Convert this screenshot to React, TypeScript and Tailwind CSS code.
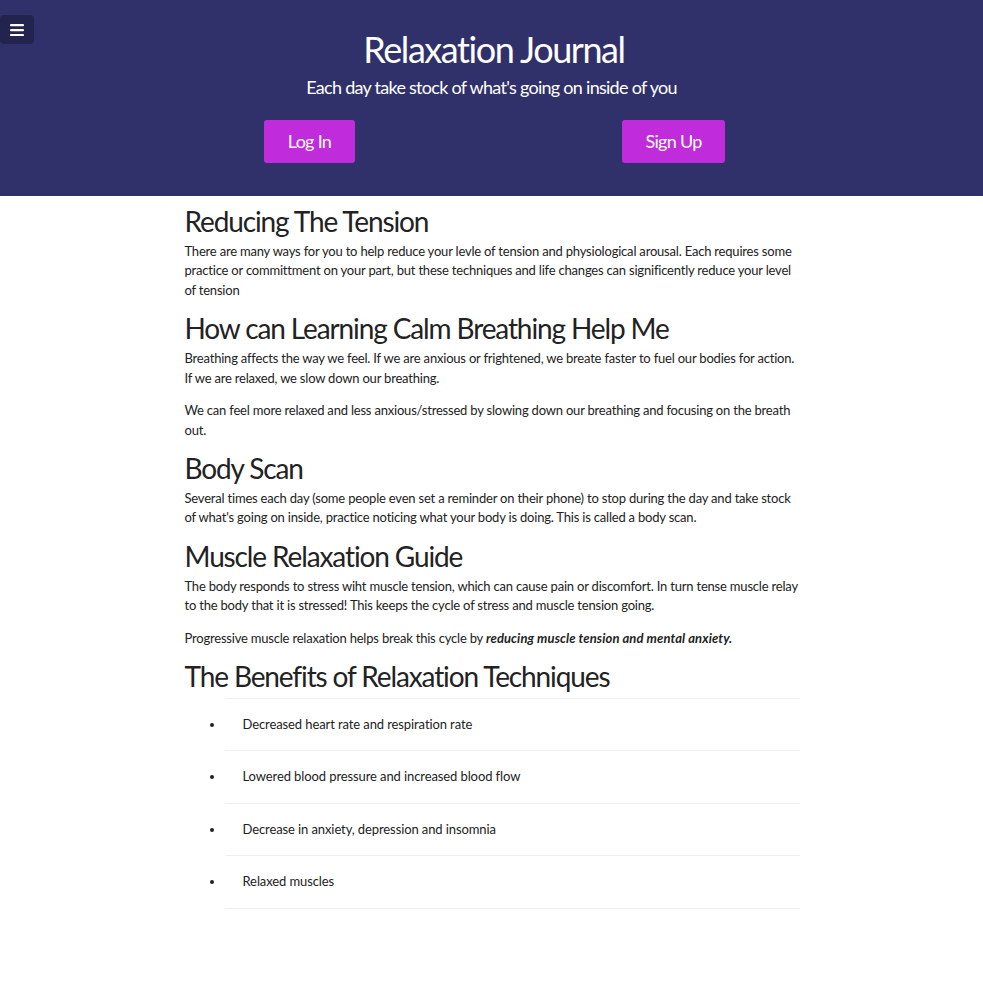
const sections = [
  {
    title: "Reducing The Tension",
    paragraphs: [
      "There are many ways for you to help reduce your levle of tension and physiological arousal. Each requires some practice or committment on your part, but these techniques and life changes can significently reduce your level of tension",
    ],
  },
  {
    title: "How can Learning Calm Breathing Help Me",
    paragraphs: [
      "Breathing affects the way we feel. If we are anxious or frightened, we breate faster to fuel our bodies for action. If we are relaxed, we slow down our breathing.",
      "We can feel more relaxed and less anxious/stressed by slowing down our breathing and focusing on the breath out.",
    ],
  },
  {
    title: "Body Scan",
    paragraphs: [
      "Several times each day (some people even set a reminder on their phone) to stop during the day and take stock of what's going on inside, practice noticing what your body is doing. This is called a body scan.",
    ],
  },
];

const benefits = [
  "Decreased heart rate and respiration rate",
  "Lowered blood pressure and increased blood flow",
  "Decrease in anxiety, depression and insomnia",
  "Relaxed muscles",
];

function Heading({ children }: { children: React.ReactNode }) {
  return (
    <h2 className="text-[28px] leading-[1.1] tracking-[-0.04em] mt-[10px] mb-[5px] text-[#222]">{children}</h2>
  );
}

function Para({ children }: { children: React.ReactNode }) {
  return <p className="text-[13px] leading-[1.5] tracking-[-0.2px] mb-[13px] text-[#222]">{children}</p>;
}

export default function App() {
  return (
    <div className="min-h-[983px] bg-white" style={{ fontFamily: "Lato, 'Open Sans', sans-serif" }}>
      <header className="relative bg-[#30316a] text-white text-center pt-[30px] h-[196px]">
        <button className="absolute top-[15px] left-0 w-[34px] h-[29px] rounded-[4px] bg-[#22244f] flex items-center justify-center">
          <svg width="14" height="12" viewBox="0 0 14 12">
            <rect x="0" y="0" width="14" height="2.2" rx="1" fill="white" />
            <rect x="0" y="5" width="14" height="2.2" rx="1" fill="white" />
            <rect x="0" y="10" width="14" height="2.2" rx="1" fill="white" />
          </svg>
        </button>
        <h1 className="text-[36px] leading-[1.1] tracking-[-0.04em] pl-[5px]">Relaxation Journal</h1>
        <p className="text-[18px] leading-[1.5] tracking-[-0.04em] mt-[4px]">
          Each day take stock of what's going on inside of you
        </p>
        <div className="flex justify-center mt-[19px]">
          <div className="w-[364px] flex justify-center">
            <button className="bg-[#c02bdc] text-white text-[18px] tracking-[-0.04em] h-[43px] px-[24px] rounded-[3px]">
              Log In
            </button>
          </div>
          <div className="w-[364px] flex justify-center">
            <button className="bg-[#c02bdc] text-white text-[18px] tracking-[-0.04em] h-[43px] px-[23px] rounded-[3px]">
              Sign Up
            </button>
          </div>
        </div>
      </header>

      <main className="w-[616px] mx-auto pl-px">
        {sections.map((s) => (
          <section key={s.title}>
            <Heading>{s.title}</Heading>
            {s.paragraphs.map((p, i) => (
              <Para key={i}>{p}</Para>
            ))}
          </section>
        ))}
        <section>
          <Heading>Muscle Relaxation Guide</Heading>
          <Para>
            The body responds to stress wiht muscle tension, which can cause pain or discomfort. In turn tense muscle relay to the body that it is stressed! This keeps the cycle of stress and muscle tension going.
          </Para>
          <Para>
            Progressive muscle relaxation helps break this cycle by{" "}
            <em className="font-bold tracking-[0.1px]">reducing muscle tension and mental anxiety.</em>
          </Para>
        </section>
        <section>
          <Heading>The Benefits of Relaxation Techniques</Heading>
          <ul className="list-disc pl-[40px] mt-[6px] text-[13px] leading-[1.5] tracking-[-0.1px] text-[#222]">
            {benefits.map((b, i) => (
              <li
                key={b}
                className={`py-4 pl-[18px] border-t border-[#f0f0f0] ${i === benefits.length - 1 ? "border-b" : ""}`}
              >
                {b}
              </li>
            ))}
          </ul>
        </section>
      </main>
    </div>
  );
}
